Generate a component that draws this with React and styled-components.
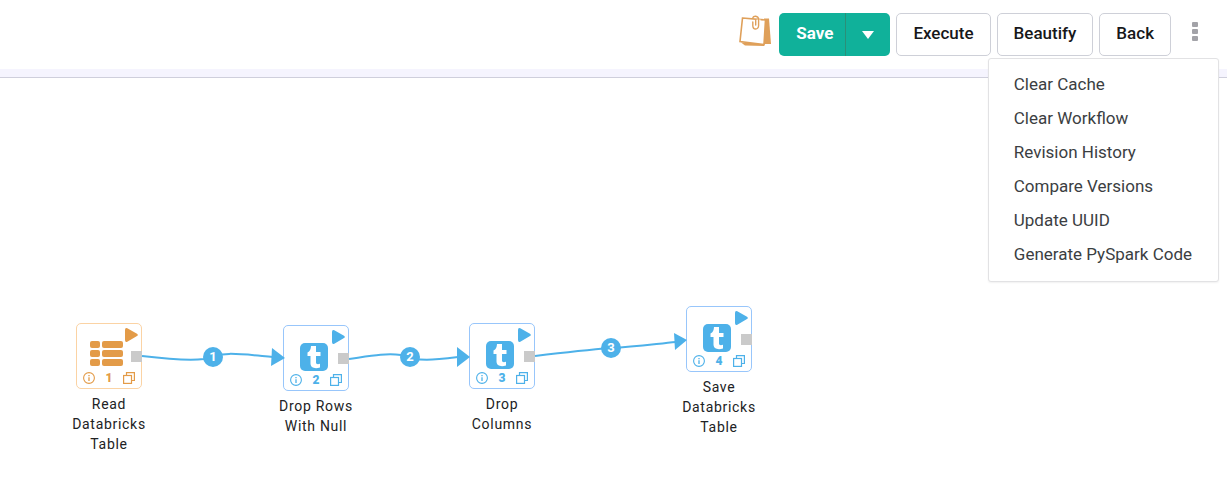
import React from "react";
import styled, { createGlobalStyle } from "styled-components";

const GlobalStyle = createGlobalStyle`
  *, *::before, *::after { box-sizing: border-box; }
  body {
    margin: 0;
    background: #ffffff;
    color: #212529;
    font-family: Roboto, "Liberation Sans", sans-serif;
  }
  button { font-family: inherit; cursor: pointer; }
`;

const Toolbar = styled.header`
  display: flex;
  justify-content: flex-end;
  align-items: flex-start;
  gap: 6px;
  padding: 13px 8px 21px;
  border-bottom: 1px solid #cfcfdc;
  background: linear-gradient(to top, #f5f4fe 8px, #ffffff 8px);
`;

const NotesButton = styled.button`
  display: flex;
  padding: 2px 2px 0 0;
  border: 0;
  background: none;
  color: #dfa05a;
`;

const Button = styled.button`
  height: 43px;
  padding: 0 16px 3px;
  border: 1px solid #ced0d8;
  border-radius: 5px;
  background: #ffffff;
  color: #17181a;
  font-size: 17px;
  font-weight: 500;
`;

const SplitButton = styled.div`
  display: flex;
  overflow: hidden;
  border-radius: 5px;
  background: #10b19a;
`;

const SplitPart = styled.button`
  display: flex;
  align-items: center;
  height: 43px;
  padding: ${(p) => (p.$toggle ? "0 16px" : "0 12px 3px 17px")};
  border: 0;
  border-left: ${(p) => (p.$toggle ? "1px solid #2b8f78" : "0")};
  background: none;
  color: #ffffff;
  font-size: 17px;
  font-weight: 700;
`;

const MenuAnchor = styled.div`
  position: relative;
  margin-left: -6px;
`;

const KebabButton = styled.button`
  display: flex;
  justify-content: center;
  width: 48px;
  height: 43px;
  padding: 9px 0 0;
  border: 0;
  background: none;
  color: #a3a3a8;
`;

const Menu = styled.ul`
  position: absolute;
  z-index: 2;
  top: 45px;
  right: 0;
  margin: 0;
  padding: 8px 0 10px;
  border: 1px solid #e2e2e4;
  border-radius: 3px;
  background: #ffffff;
  box-shadow: 0 1px 2px rgba(0, 0, 0, 0.06);
  list-style: none;
`;

const MenuItem = styled.button`
  display: block;
  width: 100%;
  height: 34px;
  padding: 0 26px 0 25px;
  border: 0;
  background: none;
  color: #3b3e42;
  font-size: 17px;
  text-align: left;
  white-space: nowrap;
`;

const Canvas = styled.main`
  position: relative;
  min-height: 400px;
  overflow: hidden;
`;

const Edges = styled.svg`
  position: absolute;
  inset: 0;
  width: 100%;
  height: 100%;
  pointer-events: none;

  text {
    fill: #ffffff;
    font-size: 13px;
    font-weight: 700;
    text-anchor: middle;
  }
`;

const NodeBox = styled.article`
  position: absolute;
  left: ${(p) => p.$x}px;
  top: ${(p) => p.$y}px;
  display: flex;
  flex-direction: column;
  align-items: center;
  gap: 5px;
  width: 90px;
  color: ${(p) => (p.$source ? "#e39b48" : "#4db1e9")};
`;

const Card = styled.div`
  position: relative;
  display: flex;
  flex-direction: column;
  justify-content: space-between;
  width: 66px;
  height: 66px;
  padding: 17px 6px 4px;
  border: 1px solid ${(p) => (p.$source ? "#fbd3a4" : "#98c6fb")};
  border-radius: 5px;
  background: #ffffff;
`;

const Glyph = styled.div`
  display: flex;
  padding-left: ${(p) => (p.$source ? 7 : 10)}px;
`;

const RunButton = styled.button`
  position: absolute;
  top: 4px;
  right: 3px;
  display: flex;
  padding: 0;
  border: 0;
  background: none;
  color: inherit;
`;

const Port = styled.span`
  position: absolute;
  top: 27px;
  right: -1px;
  width: 11px;
  height: 11px;
  background: #cacaca;
`;

const CardFooter = styled.div`
  display: flex;
  justify-content: space-between;
  align-items: center;
  height: 12px;
  font-size: 12px;
  font-weight: 900;
  line-height: 12px;
`;

const IconButton = styled.button`
  display: flex;
  padding: 0;
  border: 0;
  background: none;
  color: inherit;
`;

const Label = styled.h2`
  margin: 0;
  color: #212224;
  font-size: 14px;
  font-weight: 400;
  letter-spacing: 0.05em;
  line-height: 20px;
  text-align: center;
`;

const NotesIcon = () => (
  <svg width="34" height="32" viewBox="0 0 34 32" fill="none" aria-hidden="true">
    <path d="M27 3.500H32L34 29H27z" fill="currentColor" />
    <path d="M4 27.500 8 30.500 27 31 28 28z" fill="currentColor" />
    <path d="M5.500 3 28.500 5 27 29.500 3 26.500z" fill="#fff" stroke="currentColor" strokeWidth="1.600" />
    <path d="M16 8V11c0 3.600 5.500 3.600 5.500 0V4.500" stroke="#fff" strokeWidth="4" />
    <path d="M15.800 7V10.500c0 4.700 5.800 4.700 5.800 0V4.500c0-4.200-5.800-4.200-5.800-1.200M18.700 10V5.500" stroke="currentColor" strokeWidth="1.400" strokeLinecap="round" />
  </svg>
);

const PlayIcon = () => (
  <svg width="13" height="14" viewBox="0 0 13 14" fill="currentColor" aria-hidden="true">
    <path d="M0 2Q0-.6 2.300.3L12 5.700Q13.800 7 12 8L2.300 13.800Q0 14.600 0 12z" />
  </svg>
);

const ListIcon = () => (
  <svg width="33" height="25" viewBox="0 0 33 25" fill="currentColor" aria-hidden="true">
    {[0, 9, 18].map((y) => (
      <g key={y}>
        <rect x="0" y={y} width="10" height="7" rx="2" />
        <rect x="12" y={y} width="21" height="7" rx="2" />
      </g>
    ))}
  </svg>
);

const TransformIcon = () => (
  <svg width="28" height="28" viewBox="0 0 28 28" aria-hidden="true">
    <rect width="28" height="28" rx="5" fill="currentColor" />
    <path
      d="M11 3h5v6h4.500v4H16v6.500c0 1.800 1.800 2 4 1.300v3.700c-4.800 1.500-9.500.5-9.500-4V13H7.500V9.500C10 8.700 10.800 6 11 3z"
      fill="#fff"
    />
  </svg>
);

const InfoIcon = () => (
  <svg width="12" height="12" viewBox="0 0 12 12" fill="none" stroke="currentColor" aria-hidden="true">
    <circle cx="6" cy="6" r="5.400" strokeWidth="1.100" />
    <path d="M6 5.300V9M6 3V4.200" strokeWidth="1.300" />
  </svg>
);

const CopyIcon = () => (
  <svg width="12" height="12" viewBox="0 0 12 12" fill="none" stroke="currentColor" strokeWidth="1.200" aria-hidden="true">
    <path d="M3.500 3.500V.6H11.400V8.500H8.500" />
    <rect x=".6" y="3.500" width="7.900" height="7.900" />
  </svg>
);

const menuItems = [
  "Clear Cache",
  "Clear Workflow",
  "Revision History",
  "Compare Versions",
  "Update UUID",
  "Generate PySpark Code",
];

const nodes = [
  { id: 1, label: "Read Databricks Table", x: 64, y: 245, source: true },
  { id: 2, label: "Drop Rows With Null", x: 271, y: 247 },
  { id: 3, label: "Drop Columns", x: 457, y: 245 },
  { id: 4, label: "Save Databricks Table", x: 674, y: 228 },
];

const edges = [
  { id: 1, path: "M142 278C167 281 188 283 204 281C222 273 240 276 273 279", arrow: "272,270 285,280 271,288", x: 213, y: 279 },
  { id: 2, path: "M349 281C370 278 385 275 401 277C418 284 434 282 458 279", arrow: "457,269 470,279 457,289", x: 410, y: 279 },
  { id: 3, path: "M535 278C560 275 586 272 611 270C635 269 655 266 676 264", arrow: "674,255 687,262 675,272", x: 611, y: 270 },
];

function FlowNode({ node }) {
  return (
    <NodeBox $x={node.x} $y={node.y} $source={node.source}>
      <Card $source={node.source}>
        <Glyph $source={node.source}>{node.source ? <ListIcon /> : <TransformIcon />}</Glyph>
        <RunButton aria-label={`Run ${node.label}`}>
          <PlayIcon />
        </RunButton>
        <CardFooter>
          <IconButton aria-label="Details">
            <InfoIcon />
          </IconButton>
          <span>{node.id}</span>
          <IconButton aria-label="Duplicate">
            <CopyIcon />
          </IconButton>
        </CardFooter>
        <Port />
      </Card>
      <Label>{node.label}</Label>
    </NodeBox>
  );
}

export default function App() {
  return (
    <>
      <GlobalStyle />
      <Toolbar>
        <NotesButton aria-label="Notes">
          <NotesIcon />
        </NotesButton>
        <SplitButton>
          <SplitPart>Save</SplitPart>
          <SplitPart $toggle aria-label="More save options">
            <svg width="12" height="8" viewBox="0 0 12 8" fill="currentColor" aria-hidden="true">
              <path d="M0 0H12L6 8z" />
            </svg>
          </SplitPart>
        </SplitButton>
        <Button>Execute</Button>
        <Button>Beautify</Button>
        <Button>Back</Button>
        <MenuAnchor>
          <KebabButton aria-label="More actions" aria-expanded="true">
            <svg width="6" height="20" viewBox="0 0 6 20" fill="currentColor" aria-hidden="true">
              <rect width="6" height="5" rx="1" />
              <rect y="7" width="6" height="5" rx="1" />
              <rect y="14" width="6" height="5" rx="1" />
            </svg>
          </KebabButton>
          <Menu>
            {menuItems.map((item) => (
              <li key={item}>
                <MenuItem>{item}</MenuItem>
              </li>
            ))}
          </Menu>
        </MenuAnchor>
      </Toolbar>
      <Canvas>
        {nodes.map((node) => (
          <FlowNode key={node.id} node={node} />
        ))}
        <Edges>
          {edges.map((edge) => (
            <g key={edge.id}>
              <path d={edge.path} fill="none" stroke="#4db1e9" strokeWidth="2" />
              <polygon points={edge.arrow} fill="#4db1e9" />
              <circle cx={edge.x} cy={edge.y} r="10" fill="#4db1e9" />
              <text x={edge.x} y={edge.y + 4}>{edge.id}</text>
            </g>
          ))}
        </Edges>
      </Canvas>
    </>
  );
}
